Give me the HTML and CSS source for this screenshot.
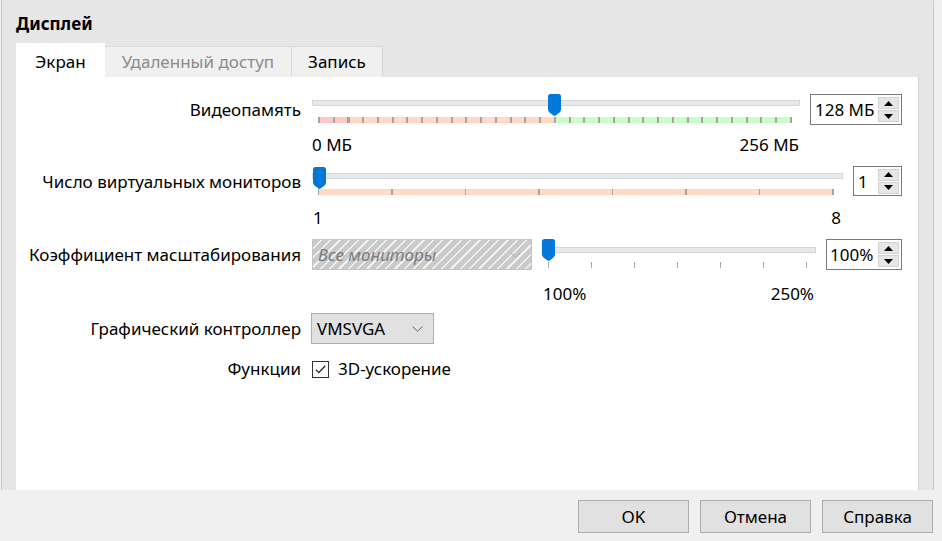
FILE: index.html
```html
<!DOCTYPE html>
<html lang="ru">
<head>
<meta charset="utf-8">
<title>Дисплей</title>
<link rel="stylesheet" href="styles.css">
</head>
<body>
<div class="dialog">
  <div class="title">Дисплей</div>
  <div class="tabs">
    <div class="tab tab-active">Экран</div>
    <div class="tab tab-disabled">Удаленный доступ</div>
    <div class="tab tab-last">Запись</div>
  </div>
  <div class="panel">
    <div class="row r1">
      <div class="lbl">Видеопамять</div>
      <div class="ctrl">
        <div class="slider-wrap">
          <div class="slider s1">
            <div class="track"></div>
            <div class="ticks ticks-vram"></div>
            <svg class="thumb th1" width="13" height="22" viewBox="0 0 13 22"><path d="M0 2.5Q0 0 2.5 0H10.5Q13 0 13 2.5V15.5Q13 17 11.5 18.5L7.5 21.6Q6.5 22.3 5.5 21.6L1.5 18.5Q0 17 0 15.5Z" fill="#0078d7"/></svg>
          </div>
          <div class="scale sc1"><span>0 МБ</span><span>256 МБ</span></div>
        </div>
        <div class="spin sp1">
          <span class="spin-val">128 МБ</span>
          <div class="spin-btns">
            <div class="spin-btn"><svg width="9" height="5" viewBox="0 0 9 5"><path d="M4.5 0L9 5H0Z" fill="#000"/></svg></div>
            <div class="spin-btn"><svg width="9" height="5" viewBox="0 0 9 5"><path d="M0 0H9L4.5 5Z" fill="#000"/></svg></div>
          </div>
        </div>
      </div>
    </div>

    <div class="row r2">
      <div class="lbl">Число виртуальных мониторов</div>
      <div class="ctrl">
        <div class="slider-wrap">
          <div class="slider s2">
            <div class="track"></div>
            <div class="ticks ticks-mon"></div>
            <svg class="thumb th2" width="13" height="22" viewBox="0 0 13 22"><path d="M0 2.5Q0 0 2.5 0H10.5Q13 0 13 2.5V15.5Q13 17 11.5 18.5L7.5 21.6Q6.5 22.3 5.5 21.6L1.5 18.5Q0 17 0 15.5Z" fill="#0078d7"/></svg>
          </div>
          <div class="scale sc2"><span>1</span><span>8</span></div>
        </div>
        <div class="spin sp2">
          <span class="spin-val">1</span>
          <div class="spin-btns">
            <div class="spin-btn"><svg width="9" height="5" viewBox="0 0 9 5"><path d="M4.5 0L9 5H0Z" fill="#000"/></svg></div>
            <div class="spin-btn"><svg width="9" height="5" viewBox="0 0 9 5"><path d="M0 0H9L4.5 5Z" fill="#000"/></svg></div>
          </div>
        </div>
      </div>
    </div>

    <div class="row r3">
      <div class="lbl">Коэффициент масштабирования</div>
      <div class="ctrl">
        <div class="combo combo-disabled">
          <span class="combo-text">Все мониторы</span>
          <svg class="chev" width="11" height="6" viewBox="0 0 11 6"><path d="M0.5 0.5L5.5 5.2L10.5 0.5" fill="none" stroke="#b0b0b0" stroke-width="1"/></svg>
        </div>
        <div class="slider-wrap">
          <div class="slider s3">
            <div class="track"></div>
            <div class="ticks ticks-scale"></div>
            <svg class="thumb th3" width="13" height="22" viewBox="0 0 13 22"><path d="M0 2.5Q0 0 2.5 0H10.5Q13 0 13 2.5V15.5Q13 17 11.5 18.5L7.5 21.6Q6.5 22.3 5.5 21.6L1.5 18.5Q0 17 0 15.5Z" fill="#0078d7"/></svg>
          </div>
          <div class="scale sc3"><span>100%</span><span>250%</span></div>
        </div>
        <div class="spin sp3">
          <span class="spin-val">100%</span>
          <div class="spin-btns">
            <div class="spin-btn"><svg width="9" height="5" viewBox="0 0 9 5"><path d="M4.5 0L9 5H0Z" fill="#000"/></svg></div>
            <div class="spin-btn"><svg width="9" height="5" viewBox="0 0 9 5"><path d="M0 0H9L4.5 5Z" fill="#000"/></svg></div>
          </div>
        </div>
      </div>
    </div>

    <div class="row r4">
      <div class="lbl">Графический контроллер</div>
      <div class="ctrl">
        <div class="combo combo-gc">
          <span class="combo-text">VMSVGA</span>
          <svg class="chev" width="11" height="6" viewBox="0 0 11 6"><path d="M0.5 0.5L5.5 5.2L10.5 0.5" fill="none" stroke="#606060" stroke-width="1"/></svg>
        </div>
      </div>
    </div>

    <div class="row r5">
      <div class="lbl">Функции</div>
      <div class="ctrl">
        <div class="check">
          <svg width="11" height="9" viewBox="0 0 11 9"><path d="M0.8 4.6L3.8 7.6L10.2 0.8" fill="none" stroke="#222" stroke-width="1.3"/></svg>
        </div>
        <span class="check-text">3D-ускорение</span>
      </div>
    </div>
  </div>
</div>
<div class="footer">
  <div class="btn">OK</div>
  <div class="btn">Отмена</div>
  <div class="btn">Справка</div>
</div>
</body>
</html>
```

FILE: styles.css
```css
html, body {
  margin: 0;
  padding: 0;
}
body {
  width: 942px;
  height: 541px;
  background: #f0f0f0;
  font-family: "Noto Sans", "Segoe UI", sans-serif;
  font-size: 17px;
  color: #000;
  display: flex;
  flex-direction: column;
  overflow: hidden;
}
.dialog {
  margin-left: 1px;
  width: 933px;
  height: 490px;
  flex: none;
  border-left: 1px solid #c9c9c9;
  border-right: 1px solid #c9c9c9;
  border-top-right-radius: 2px;
  background: #e6e6e6;
  padding: 0 14px;
  box-sizing: border-box;
  display: flex;
  flex-direction: column;
}
.title {
  height: 43px;
  line-height: 47px;
  font-weight: bold;
  font-size: 17px;
  flex: none;
}
.tabs {
  display: flex;
  align-items: flex-end;
  height: 34px;
  flex: none;
}
.tab {
  height: 31px;
  line-height: 30px;
  box-sizing: border-box;
  text-align: center;
  background: #f0f0f0;
  border: 1px solid #d9d9d9;
  border-bottom: none;
  border-left: none;
}
.tab-active {
  height: 34px;
  line-height: 37px;
  background: #fff;
  border: none;
  width: 89px;
}
.tab-disabled {
  color: #8c8c8c;
  width: 187px;
}
.tab-last {
  width: 91px;
}
.panel {
  flex: 1;
  background: #fff;
  border-right: 1px solid #d0d0d0;
  padding: 17px 16px 0 0;
}
.row {
  display: grid;
  grid-template-columns: 285px 1fr;
  column-gap: 10px;
  align-items: start;
}
.lbl {
  text-align: right;
  height: 31px;
  line-height: 31px;
  white-space: nowrap;
}
.ctrl {
  display: flex;
  align-items: flex-start;
  gap: 10px;
}
.slider-wrap {
  flex: 1;
  min-width: 0;
}
.slider {
  position: relative;
  display: flow-root;
  height: 31px;
}
.track {
  margin-left: 1px;
  height: 6px;
  box-sizing: border-box;
  background: #e7eaea;
  border: 1px solid #d6d6d6;
}
.thumb {
  position: absolute;
  top: 0;
  display: block;
}
.ticks {
  height: 6px;
}
.s1 .track { margin-top: 6px; }
.ticks-vram {
  margin-top: 11px;
  margin-left: 7px;
  width: 474px;
  background:
    repeating-linear-gradient(to right, #a8a39e 0 2px, transparent 2px 14.75px),
    linear-gradient(to right, #ffc8c8 0 31px, #ffd9c6 31px 237px, #c8ffc8 237px 100%);
}
.th1 { left: 237px; }

.s2 { height: 30px; }
.s2 .track { margin-top: 7px; }
.ticks-mon {
  margin-top: 10px;
  margin-left: 7px;
  width: 516px;
  background:
    repeating-linear-gradient(to right, #a8a39e 0 1.5px, transparent 1.5px 73.43px),
    #ffd9c6;
}
.th2 { left: 2px; top: 1px; }

.s3 .track { margin-top: 8px; }
.ticks-scale {
  margin-top: 9px;
  margin-left: 6px;
  width: 260px;
  background: repeating-linear-gradient(to right, #a8a39e 0 1.2px, transparent 1.2px 43px);
}
.th3 { left: 0; }

.scale {
  display: flex;
  justify-content: space-between;
  line-height: 20px;
  padding-left: 1px;
}
.sc1 { margin-top: 10px; padding-right: 1px; }
.sc2 { margin-top: 12px; padding-left: 2px; padding-right: 2px; }
.sc3 { margin-top: 14px; padding-right: 2px; }

.spin {
  box-sizing: border-box;
  height: 31px;
  border: 1px solid #7a7a7a;
  background: #fff;
  display: flex;
  align-items: center;
  padding-left: 4px;
  padding-right: 2px;
}
.spin-val {
  flex: 1;
  line-height: 29px;
  white-space: nowrap;
}
.sp1 { width: 92px; }
.sp2 { width: 49px; height: 30px; }
.sp3 { width: 76px; padding-left: 3px; }
.spin-btns {
  display: flex;
  flex-direction: column;
  gap: 1px;
  width: 21px;
  flex: none;
}
.spin-btn {
  height: 12px;
  background: #e6e6e6;
  border: 1px solid #d2d2d2;
  box-sizing: border-box;
  display: flex;
  align-items: center;
  justify-content: center;
}
.r1 { margin-top: 0; }
.r2 { margin-top: 11px; }
.r3 { margin-top: 11px; }
.r4 { margin-top: 9px; }
.r5 { margin-top: 15px; }

.combo {
  box-sizing: border-box;
  height: 31px;
  display: flex;
  align-items: center;
  padding: 0 6px 0 5px;
}
.combo-text {
  flex: 1;
  white-space: nowrap;
}
.combo-disabled {
  margin-left: 1px;
  width: 220px;
  flex: none;
  border: 1px solid #c4c4c4;
  background: repeating-linear-gradient(135deg, #cacaca 0 5px, #f2f2f2 5px 6.6px);
}
.combo-disabled .combo-text {
  font-style: italic;
  color: #7c7c7c;
}
.combo-gc {
  width: 123px;
  border: 1px solid #adadad;
  background: #e1e1e1;
}
.chev {
  display: block;
  margin-right: 4px;
}
.r5 .lbl {
  height: 20px;
  line-height: 20px;
}
.r5 .ctrl {
  gap: 9px;
  align-items: center;
  height: 20px;
}
.check {
  margin-left: 1px;
  width: 17px;
  height: 17px;
  box-sizing: border-box;
  border: 1px solid #333;
  background: #fff;
  display: flex;
  align-items: center;
  justify-content: center;
}
.check-text {
  line-height: 20px;
}
.footer {
  flex: 1;
  display: flex;
  justify-content: flex-end;
  align-items: flex-start;
  gap: 11px;
  padding: 10px 9px 0 0;
}
.btn {
  width: 111px;
  height: 33px;
  box-sizing: border-box;
  border: 1px solid #adadad;
  background: #e1e1e1;
  text-align: center;
  line-height: 31px;
}
```
